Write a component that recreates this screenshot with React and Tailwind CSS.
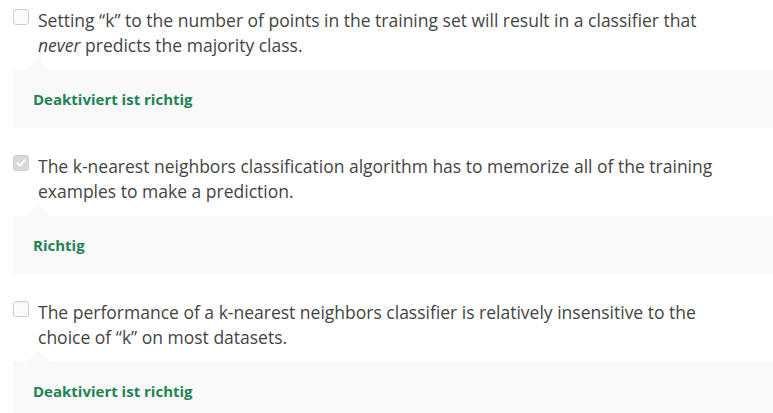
import React from "react";

const items = [
  {
    text: (
      <>
        Setting “k” to the number of points in the training set will result in a classifier that <em>never</em> predicts the majority class.
      </>
    ),
    checked: false,
    feedback: "Deaktiviert ist richtig",
  },
  {
    text: (
      <>
        The k-nearest neighbors classification algorithm has to memorize all of the training examples to make a prediction.
      </>
    ),
    checked: true,
    feedback: "Richtig",
  },
  {
    text: (
      <>
        The performance of a k-nearest neighbors classifier is relatively insensitive to the choice of “k” on most datasets.
      </>
    ),
    checked: false,
    feedback: "Deaktiviert ist richtig",
  },
];

function Checkbox({ checked }) {
  if (checked) {
    return (
      <div className="w-4 h-4 shrink-0 rounded-[3px] bg-[#d9d9d9] border border-[#d0d0d0] flex items-center justify-center">
        <svg width="12" height="12" viewBox="0 0 12 12">
          <path d="M2.3 6.2 L4.8 8.6 L9.8 3.2" fill="none" stroke="#ffffff" strokeWidth="2" strokeLinecap="round" strokeLinejoin="round" />
        </svg>
      </div>
    );
  }
  return (
    <div className="w-4 h-4 shrink-0 rounded-[3px] bg-[#fbfbfb] border border-[#cfcfcf] shadow-[inset_0_1px_1px_rgba(0,0,0,0.04)]" />
  );
}

export default function App() {
  return (
    <div className="bg-white w-[773px] h-[413px] overflow-hidden pl-[13px] pt-2 font-['Open_Sans',sans-serif]">
      {items.map((it, i) => (
        <div key={i} className="mb-[26px]">
          <div className="flex">
            <div className="pt-[1px]">
              <Checkbox checked={it.checked} />
            </div>
            <p className="ml-[9px] pr-[40px] text-[17.5px] leading-[25px] text-[#444444]">{it.text}</p>
          </div>
          <div className="relative mt-3 h-[58px] bg-[#f9f9f9] px-5 flex items-center">
            <div className="absolute -top-3 left-[14px] w-0 h-0 border-l-[11px] border-r-[11px] border-b-[12px] border-l-transparent border-r-transparent border-b-[#f9f9f9]" />
            <span className="text-[15px] font-bold text-[#1f8354]">{it.feedback}</span>
          </div>
        </div>
      ))}
    </div>
  );
}
